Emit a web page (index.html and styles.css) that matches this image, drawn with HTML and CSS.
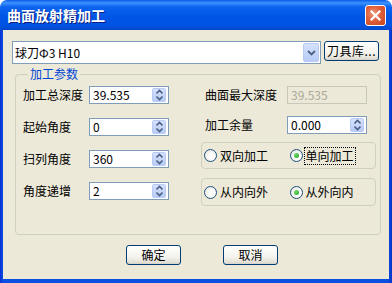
FILE: index.html
```html
<!DOCTYPE html>
<html lang="zh-CN">
<head>
    <meta charset="UTF-8">
    <title>曲面放射精加工</title>
    <link rel="stylesheet" href="styles.css">
</head>
<body>
    <div class="window">
        <div class="titlebar">
            <span class="title">曲面放射精加工</span>
            <button class="close" title="关闭">
                <svg width="11" height="11" viewBox="0 0 11 11"><path d="M1.5 1.5 L9.5 9.5 M9.5 1.5 L1.5 9.5" stroke="#fff" stroke-width="2.2" stroke-linecap="square"/></svg>
            </button>
        </div>
        <div class="frame">
            <div class="client">
                <div class="tool-row">
                    <div class="combo">
                        <span class="combo-text">球刀Φ3 H10</span>
                        <span class="drop">
                            <svg width="9" height="6" viewBox="0 0 9 6"><path d="M1 1 L4.5 4.5 L8 1" fill="none" stroke="#4D6185" stroke-width="1.8"/></svg>
                        </span>
                    </div>
                    <button class="btn tool-btn">刀具库...</button>
                </div>

                <fieldset class="group">
                    <legend>加工参数</legend>
                    <div class="params">
                        <div class="col">
                            <div class="row">
                                <label>加工总深度</label>
                                <div class="spin"><span>39.535</span><span class="spin-btn"><svg width="7" height="12" viewBox="0 0 7 12"><path d="M0.5 4.5 L3.5 1.5 L6.5 4.5 M0.5 7.5 L3.5 10.5 L6.5 7.5" fill="none" stroke="#4D6185" stroke-width="1.6"/></svg></span></div>
                            </div>
                            <div class="row">
                                <label>起始角度</label>
                                <div class="spin"><span>0</span><span class="spin-btn"><svg width="7" height="12" viewBox="0 0 7 12"><path d="M0.5 4.5 L3.5 1.5 L6.5 4.5 M0.5 7.5 L3.5 10.5 L6.5 7.5" fill="none" stroke="#4D6185" stroke-width="1.6"/></svg></span></div>
                            </div>
                            <div class="row">
                                <label>扫列角度</label>
                                <div class="spin"><span>360</span><span class="spin-btn"><svg width="7" height="12" viewBox="0 0 7 12"><path d="M0.5 4.5 L3.5 1.5 L6.5 4.5 M0.5 7.5 L3.5 10.5 L6.5 7.5" fill="none" stroke="#4D6185" stroke-width="1.6"/></svg></span></div>
                            </div>
                            <div class="row">
                                <label>角度递增</label>
                                <div class="spin"><span>2</span><span class="spin-btn"><svg width="7" height="12" viewBox="0 0 7 12"><path d="M0.5 4.5 L3.5 1.5 L6.5 4.5 M0.5 7.5 L3.5 10.5 L6.5 7.5" fill="none" stroke="#4D6185" stroke-width="1.6"/></svg></span></div>
                            </div>
                        </div>

                        <div class="col right">
                            <div class="row">
                                <label>曲面最大深度</label>
                                <div class="edit disabled">39.535</div>
                            </div>
                            <div class="row row-allow">
                                <label>加工余量</label>
                                <div class="spin"><span>0.000</span><span class="spin-btn"><svg width="7" height="12" viewBox="0 0 7 12"><path d="M0.5 4.5 L3.5 1.5 L6.5 4.5 M0.5 7.5 L3.5 10.5 L6.5 7.5" fill="none" stroke="#4D6185" stroke-width="1.6"/></svg></span></div>
                            </div>
                            <div class="radio-box first">
                                <span class="radio-item"><span class="radio"></span>双向加工</span>
                                <span class="radio-item"><span class="radio checked"></span><span class="focus">单向加工</span></span>
                            </div>
                            <div class="radio-box second">
                                <span class="radio-item"><span class="radio"></span>从内向外</span>
                                <span class="radio-item"><span class="radio checked"></span>从外向内</span>
                            </div>
                        </div>
                    </div>
                </fieldset>

                <div class="actions">
                    <button class="btn">确定</button>
                    <button class="btn">取消</button>
                </div>
            </div>
        </div>
    </div>
</body>
</html>
```

FILE: styles.css
```css
* {
    box-sizing: border-box;
}
body {
    margin: 0;
    background: #fff;
    font-family: "Noto Sans CJK SC", "Noto Sans CJK JP", sans-serif;
    font-size: 12px;
    color: #000;
}
.window {
    width: 392px;
    height: 283px;
    display: flex;
    flex-direction: column;
}
.titlebar {
    height: 30px;
    flex: none;
    display: flex;
    align-items: center;
    justify-content: space-between;
    padding: 0 6px 0 7px;
    border-radius: 7px 7px 0 0;
    background: linear-gradient(to bottom, #0A5CE6 0%, #3D94FF 10%, #0C64F0 22%, #0055E6 55%, #0053E2 85%, #0047CC 100%);
}
.title {
    color: #fff;
    font-weight: bold;
    font-size: 14px;
    line-height: 16px;
    text-shadow: 1px 1px 0 #0A1E82;
}
.close {
    width: 21px;
    height: 21px;
    padding: 0;
    border: 1px solid #fff;
    border-radius: 3px;
    background: radial-gradient(circle at 40% 40%, #F09A7E 0%, #E0603C 45%, #C8401D 100%);
    display: flex;
    align-items: center;
    justify-content: center;
}
.frame {
    flex: 1;
    display: flex;
    padding: 0 5px 4px 3px;
    background: linear-gradient(to right, #0831D9 0, #0A50E0 3px, #0A50E0 387px, #0A4AD8 389px, #0831C8 392px);
}
.client {
    flex: 1;
    background: #ECE9D8;
    padding: 11px 8px 0 9px;
}
.tool-row {
    display: flex;
    align-items: flex-start;
    gap: 3px;
}
.combo {
    width: 309px;
    height: 23px;
    border: 1px solid #7F9DB9;
    background: #fff;
    display: flex;
    align-items: center;
    justify-content: space-between;
    padding: 1px 1px 1px 2px;
}
.combo-text {
    line-height: 14px;
}
.drop {
    width: 16px;
    height: 19px;
    border: 1px solid #B9CAF6;
    border-radius: 2px;
    background: linear-gradient(to bottom, #D6E2FC, #B7CBF7);
    display: flex;
    align-items: center;
    justify-content: center;
}
.btn {
    font-family: inherit;
    font-size: 12px;
    line-height: 14px;
    color: #000;
    height: 20px;
    width: 55px;
    padding: 0;
    border: 1px solid #003C74;
    border-radius: 3px;
    background: linear-gradient(to bottom, #FFFFFF 0%, #F4F3EE 60%, #E3E1D6 90%, #D6D0C5 100%);
}
.tool-btn {
    letter-spacing: 0.5px;
}
.group {
    margin: 3px 0 0 3px;
    width: 366px;
    padding: 5px 3px 28px 7px;
    border: 1px solid #D0D0BF;
    border-radius: 4px;
    min-inline-size: 0;
}
.group legend {
    color: #0046D5;
    line-height: 14px;
    padding: 0 2px;
    margin-left: 5px;
}
.params {
    display: grid;
    grid-template-columns: 178px 175px;
}
.col {
    display: flex;
    flex-direction: column;
    gap: 14px;
}
.col.right {
    gap: 0;
}
.row {
    display: flex;
    align-items: center;
    height: 18px;
}
.row label {
    width: 66px;
    line-height: 14px;
}
.right .row {
    padding-left: 4px;
}
.right .row label {
    width: 82px;
}
.row-allow {
    margin-top: 12px;
}
.spin,
.edit {
    width: 80px;
    height: 18px;
    border: 1px solid #7F9DB9;
    background: #fff;
    display: flex;
    align-items: center;
    justify-content: space-between;
    padding: 1px 2px 1px 3px;
    line-height: 14px;
}
.edit.disabled {
    background: #ECE9D8;
    border-color: #C9C7BA;
    color: #ACA899;
}
.spin-btn {
    width: 14px;
    height: 14px;
    border: 1px solid #B9CAF6;
    border-radius: 2px;
    background: linear-gradient(to bottom, #D6E2FC, #B7CBF7);
    display: flex;
    align-items: center;
    justify-content: center;
}
.radio-box {
    height: 27px;
    border: 1px solid #D0D0BF;
    border-radius: 4px;
    display: flex;
    align-items: center;
    padding-left: 2px;
}
.radio-box.first {
    margin-top: 8px;
}
.radio-box.second {
    margin-top: 9px;
    height: 28px;
}
.radio-item {
    display: flex;
    align-items: center;
    gap: 3px;
    line-height: 14px;
    width: 90px;
}
.radio {
    width: 13px;
    height: 13px;
    border: 1px solid #1C5180;
    border-radius: 50%;
    background: radial-gradient(circle at 60% 60%, #FFFFFF 20%, #E4E2D8 100%);
    display: flex;
    align-items: center;
    justify-content: center;
}
.radio.checked::after {
    content: "";
    width: 5px;
    height: 5px;
    border-radius: 50%;
    background: radial-gradient(circle at 35% 35%, #6ADD6A, #21A121);
}
.focus {
    outline: 1px dotted #000;
    outline-offset: 1px;
}
.actions {
    display: flex;
    gap: 42px;
    margin-top: 10px;
    padding-left: 114px;
}
```
